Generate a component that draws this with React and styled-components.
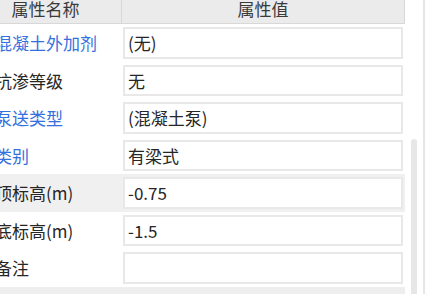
import React from "react";
import styled, { createGlobalStyle } from "styled-components";

const Global = createGlobalStyle`
  html, body { margin: 0; padding: 0; background: #fff; overflow: hidden; }
  body { font-family: "Noto Sans CJK SC", "Noto Sans", sans-serif; }
`;

const Page = styled.div`
  display: flex;
  width: 430px;
  height: 294px;
  overflow: hidden;
  background: #fff;
`;

const Panel = styled.div`
  width: 405px;
  height: 294px;
  overflow: hidden;
  display: flex;
  flex-direction: column;
`;

const Table = styled.div`
  margin-left: -30px;
  width: 435px;
  display: flex;
  flex-direction: column;
  flex: 1;
`;

const HeaderRow = styled.div`
  display: grid;
  grid-template-columns: 152px 1fr;
  height: 24px;
  background: #ebebeb;
  border-bottom: 1px solid #d8d8d8;
  border-right: 1px solid #d8d8d8;
  box-sizing: border-box;
`;

const HeaderCell = styled.div`
  font-size: 17px;
  line-height: 17px;
  color: #3a3a3a;
  text-align: center;
  border-right: ${(p) => (p.$divider ? "1px solid #d8d8d8" : "none")};
  overflow: hidden;
`;

const Row = styled.div`
  display: grid;
  grid-template-columns: 152px 1fr;
  align-items: center;
  height: 37.5px;
  background: ${(p) => (p.$active ? "#f0f0f0" : "#fff")};
`;

const Label = styled.div`
  padding-left: 25px;
  font-size: 17px;
  color: ${(p) => (p.$link ? "#3470de" : "#262626")};
  white-space: nowrap;
`;

const ValueCell = styled.div`
  padding: 0 2px 0 1px;
`;

const Box = styled.div`
  box-sizing: border-box;
  height: 31.5px;
  border: 2px solid #e8e8e8;
  background: #fff;
  padding-left: 3px;
  font-size: 17px;
  line-height: 27px;
  color: #262626;
  white-space: nowrap;
  overflow: hidden;
`;

const Footer = styled.div`
  flex: 1;
  background: #eeeeee;
`;

const Side = styled.div`
  width: 25px;
  height: 294px;
  display: flex;
  background: #fff;
`;

const Track = styled.div`
  margin-left: 6px;
  width: 6px;
  padding-top: 139px;
  display: flex;
  flex-direction: column;
`;

const Thumb = styled.div`
  flex: 1;
  background: #e7e7e7;
  border-radius: 3px 3px 0 0;
`;

const Line = styled.div`
  margin-left: 6px;
  width: 2px;
  background: #e6e6e6;
`;

const rows = [
  { label: "混凝土外加剂", value: "(无)", link: true },
  { label: "抗渗等级", value: "无" },
  { label: "泵送类型", value: "(混凝土泵)", link: true },
  { label: "类别", value: "有梁式", link: true },
  { label: "顶标高(m)", value: "-0.75", active: true },
  { label: "底标高(m)", value: "-1.5" },
  { label: "备注", value: "" },
];

export default function App() {
  return (
    <Page>
      <Global />
      <Panel>
        <Table>
          <HeaderRow>
            <HeaderCell $divider>属性名称</HeaderCell>
            <HeaderCell>属性值</HeaderCell>
          </HeaderRow>
          {rows.map((r) => (
            <Row key={r.label} $active={r.active}>
              <Label $link={r.link}>{r.label}</Label>
              <ValueCell>
                <Box>{r.value}</Box>
              </ValueCell>
            </Row>
          ))}
          <Footer />
        </Table>
      </Panel>
      <Side>
        <Track>
          <Thumb />
        </Track>
        <Line />
      </Side>
    </Page>
  );
}
